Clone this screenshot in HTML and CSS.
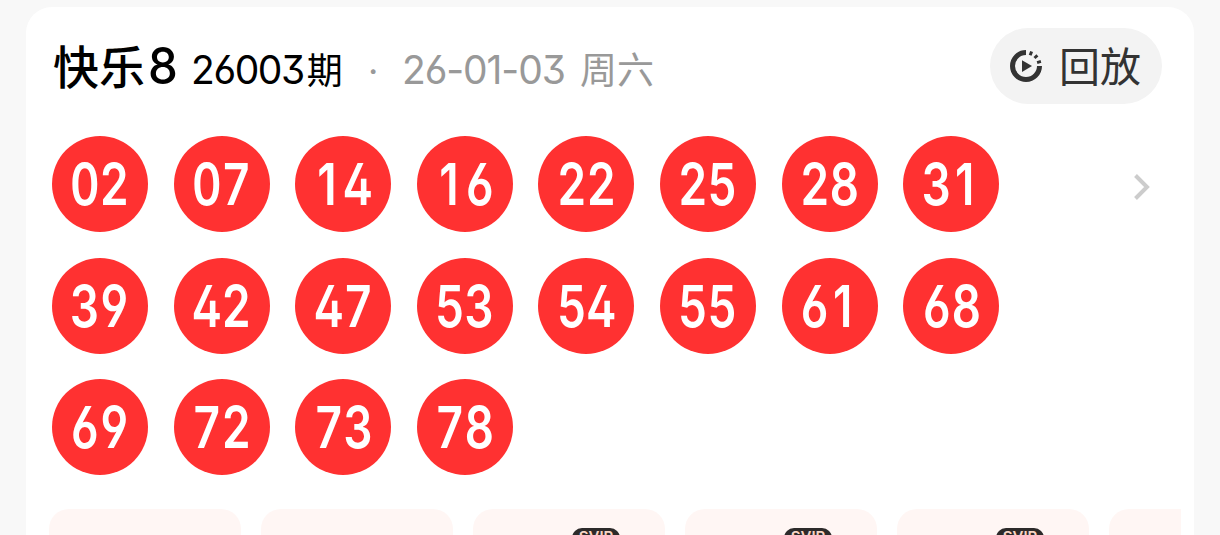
FILE: index.html
```html
<!DOCTYPE html>
<html lang="zh-CN">

<head>
  <meta charset="UTF-8">
  <meta name="viewport" content="width=device-width, initial-scale=1.0">
  <title>快乐8 开奖</title>

  <link rel="stylesheet" href="styles.css">
</head>

<body>
  <section class="card">
    <header class="card-head">
      <div class="title">
        <h2 class="name">快乐<span class="name-num">8</span></h2>
        <span class="issue"><span class="num">26003</span>期</span>
        <span class="dot">·</span>
        <span class="date"><span class="num">26-01-03</span></span>
        <span class="week">周六</span>
      </div>
      <div class="replay">
        <svg class="replay-icon" viewBox="0 0 32 32">
          <path d="M16 2.5A13.5 13.5 0 1 0 29.5 16" fill="none" stroke="#333" stroke-width="5" />
          <g fill="#333">
            <rect x="14.5" y="0.4" width="3" height="4" transform="rotate(21 16 16)" />
            <rect x="14.6" y="0.4" width="2.8" height="4" transform="rotate(47 16 16)" />
            <rect x="14.6" y="0.4" width="2.8" height="4" transform="rotate(73 16 16)" />
          </g>
          <path d="M12 10.3v11.6l10-5.8z" fill="#333" />
        </svg>
        <span class="replay-text">回放</span>
      </div>
    </header>

    <div class="result">
      <ul class="balls">
        <li><span>02</span></li>
        <li><span>07</span></li>
        <li><span><i>1</i>4</span></li>
        <li><span><i>1</i>6</span></li>
        <li><span>22</span></li>
        <li><span>25</span></li>
        <li><span>28</span></li>
        <li><span>3<i>1</i></span></li>
        <li><span>39</span></li>
        <li><span>42</span></li>
        <li><span>47</span></li>
        <li><span>53</span></li>
        <li><span>54</span></li>
        <li><span>55</span></li>
        <li><span>6<i>1</i></span></li>
        <li><span>68</span></li>
        <li><span>69</span></li>
        <li><span>72</span></li>
        <li><span>73</span></li>
        <li><span>78</span></li>
      </ul>
      <svg class="arrow" viewBox="0 0 18 28">
        <path d="M2.5 2.5L14 14L2.5 25.5" fill="none" stroke="#ccc" stroke-width="4" />
      </svg>
    </div>

    <div class="tools">
      <div class="tool"></div>
      <div class="tool"></div>
      <div class="tool"><span class="svip">SVIP</span></div>
      <div class="tool"><span class="svip">SVIP</span></div>
      <div class="tool"><span class="svip">SVIP</span></div>
      <div class="tool"></div>
    </div>
  </section>
</body>

</html>
```

FILE: styles.css
```css
* {
  margin: 0;
  padding: 0;
  box-sizing: border-box;
}

body {
  height: 535px;
  padding: 7px 26px 0;
  overflow: hidden;
  background: #f8f8f8;
  font-family: Inter, "Noto Sans CJK SC", sans-serif;
}

.card {
  height: 528px;
  padding: 21px 13px 0 23px;
  border-radius: 26px 26px 0 0;
  background: #fff;
  overflow: hidden;
}

.card-head {
  display: flex;
  justify-content: space-between;
  height: 76px;
  padding-right: 19px;
}

.title {
  display: flex;
  align-items: baseline;
  height: 76px;
  padding-left: 4px;
  line-height: 76px;
  white-space: nowrap;
}

.name {
  width: 138px;
  font-size: 46px;
  font-weight: 500;
}

.name-num {
  display: inline-block;
  margin-left: 2px;
  font-size: 51px;
  transform: scaleX(0.93);
}

.num {
  font-size: 39px;
  letter-spacing: -1.4px;
  font-feature-settings: "cv03", "cv09";
}

.issue {
  width: 177px;
  font-size: 36px;
}

.issue .num {
  margin-right: 3px;
}

.dot {
  width: 34px;
  color: #999;
  font-size: 36px;
}

.date {
  width: 178px;
  color: #999;
}

.date .num {
  letter-spacing: -1.1px;
}

.week {
  color: #999;
  font-size: 37px;
}

/* 回放按钮 */
.replay {
  display: flex;
  align-items: center;
  width: 172px;
  height: 76px;
  padding-left: 20px;
  border-radius: 38px;
  background: #f3f3f3;
}

.replay-icon {
  width: 32px;
  height: 32px;
}

.replay-text {
  margin-left: 17px;
  padding-top: 2px;
  color: #333;
  font-size: 41px;
  line-height: 74px;
}

/* 开奖号码 */
.result {
  display: flex;
  justify-content: space-between;
  padding: 32px 30px 0 3px;
}

.balls {
  display: grid;
  grid-template-columns: repeat(8, 96px);
  gap: 25.6px;
  list-style: none;
}

.balls li {
  display: flex;
  align-items: center;
  justify-content: center;
  height: 96px;
  border-radius: 50%;
  background: #ff3131;
}

.balls span {
  color: #fff;
  font-size: 58px;
  font-weight: 600;
  line-height: 98px;
  white-space: nowrap;
  font-feature-settings: "cv02", "cv03", "cv04", "tnum";
  transform: scaleX(0.79);
}

/* 数字1与其它数字等宽 */
.balls i {
  display: inline-block;
  width: 37px;
  padding-right: 8px;
  font-style: normal;
  text-align: right;
  font-feature-settings: "tnum" 0;
}

.arrow {
  width: 18px;
  height: 28px;
  margin-top: 37px;
}

.tools {
  display: flex;
  gap: 20px;
  margin-top: 34px;
  overflow: hidden;
}

.tool {
  flex: none;
  width: 192px;
  height: 26px;
  padding: 19px 0 0 99px;
  border-radius: 20px 20px 0 0;
  background: #fff6f4;
}

.svip {
  display: block;
  width: 48px;
  height: 24px;
  border-radius: 10px;
  background: #2d2a2a;
  color: #f8d5c4;
  font-size: 15px;
  font-weight: 600;
  line-height: 18px;
  text-align: center;
}
```
